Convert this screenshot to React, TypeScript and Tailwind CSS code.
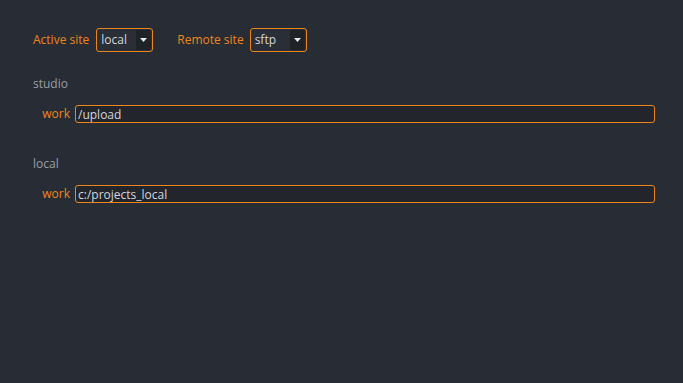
import React from 'react';

const font = { fontFamily: '"Open Sans", "Noto Sans", sans-serif' };

function Select({ value }: { value: string }) {
    return (
        <div className="flex h-[24px] w-[57px] rounded-[3px] border border-[#f0851d] bg-[#2a2e36]">
            <span className="flex-1 pl-[4px] text-[12px] leading-[22px] text-[#d3d7dd]">{value}</span>
            <div className="m-px flex w-[15px] items-center justify-center rounded-r-[2px] bg-[#1f2227]">
                <svg width="7" height="4" viewBox="0 0 7 4">
                    <path d="M0 0h7L3.5 4z" fill="#e6e8eb" />
                </svg>
            </div>
        </div>
    );
}

function PathRow({ value }: { value: string }) {
    return (
        <div className="flex items-center h-[18px]">
            <span className="w-[42px] shrink-0 pr-[5px] text-right text-[12px] text-[#f0851d]">work</span>
            <div className="flex-1 h-[18px] rounded-[3px] border border-[#f0851d] bg-[#22252c] pl-[2px] text-[12px] leading-[17px] text-[#d3d7dd]">
                {value}
            </div>
        </div>
    );
}

export default function App() {
    return (
        <div className="w-[683px] h-[383px] bg-[#282c34] pt-[28px] pl-[33px] pr-[28px]" style={font}>
            <div className="flex items-center h-[24px]">
                <span className="text-[12px] text-[#f0851d]">Active site</span>
                <div className="ml-[7px]"><Select value="local" /></div>
                <span className="ml-[24px] text-[12px] text-[#f0851d]">Remote site</span>
                <div className="ml-[6px]"><Select value="sftp" /></div>
            </div>

            <div className="mt-[24px] text-[12px] leading-[16px] text-[#9a9ea6]">studio</div>
            <div className="mt-[13px]"><PathRow value="/upload" /></div>

            <div className="mt-[33px] text-[12px] leading-[16px] text-[#9a9ea6]">local</div>
            <div className="mt-[13px]"><PathRow value="c:/projects_local" /></div>
        </div>
    );
}
